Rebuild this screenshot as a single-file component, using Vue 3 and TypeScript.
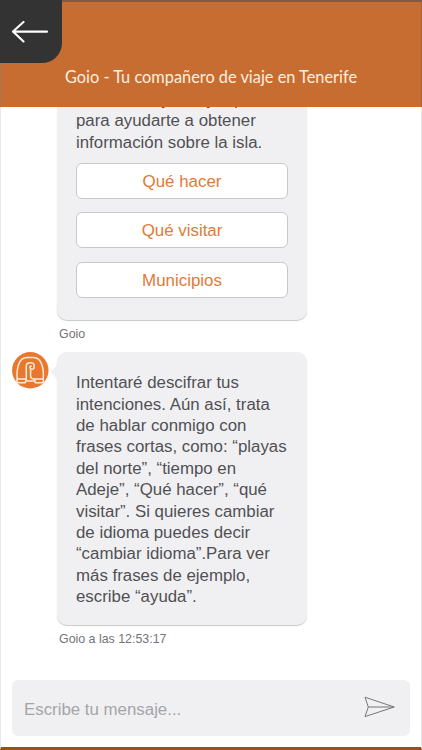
<script setup lang="ts">
import { ref } from 'vue'

const draft = ref('')
const choices: string[] = ['Qué hacer', 'Qué visitar', 'Municipios']
const intro: string[] = ['llamo Goio y estoy aquí', 'para ayudarte a obtener', 'información sobre la isla.']
const help: string[] = [
  'Intentaré descifrar tus',
  'intenciones. Aún así, trata',
  'de hablar conmigo con',
  'frases cortas, como: “playas',
  'del norte”, “tiempo en',
  'Adeje”, “Qué hacer”, “qué',
  'visitar”. Si quieres cambiar',
  'de idioma puedes decir',
  '“cambiar idioma”.Para ver',
  'más frases de ejemplo,',
  'escribe “ayuda”.',
]
</script>

<template>
  <div class="screen">
    <header class="header">
      <button class="back" aria-label="Volver">
        <svg width="36" height="22" viewBox="0 0 36 22">
          <path d="M35 10.6H1M11.5 1L1 10.6L11.5 20.5" fill="none" stroke="#fff" stroke-width="2.1" stroke-linecap="round" />
        </svg>
      </button>
      <h1>Goio - Tu compañero de viaje en Tenerife</h1>
    </header>

    <main class="chat">
      <section class="bubble first">
        <p v-for="line in intro" :key="line">{{ line }}</p>
        <div class="choices">
          <button v-for="choice in choices" :key="choice" class="choice">{{ choice }}</button>
        </div>
      </section>
      <div class="meta">Goio</div>

      <div class="row">
        <svg class="avatar" width="37" height="37" viewBox="0 0 37 37">
          <circle cx="18.3" cy="18.3" r="18.2" fill="#e9782f" />
          <g fill="none" stroke="#ffe9d8" stroke-width="1.5" stroke-linejoin="round">
            <path d="M5.2 27C4.4 17 6.5 5.6 15 5.6H21.4C30 5.6 32 17 31.2 27" />
            <path d="M14.3 27V13.8C14.3 9.8 22 9.8 22 13V15.8C22 17.8 18 17.8 18 15.6V14.2H19.8" />
            <path d="M18.6 17.4V24C18.6 26 20 27 22.4 27" />
            <path d="M5.2 27H14.3L13.2 30.8H6.6C4.9 30.8 4.6 28.6 5.2 27ZM31.2 27H22.4L23.4 30.8H29.8C31.5 30.8 31.8 28.6 31.2 27Z" />
            <path d="M13.8 29H22.8" />
          </g>
        </svg>
        <section class="bubble second">
          <p v-for="line in help" :key="line">{{ line }}</p>
        </section>
      </div>
      <div class="meta">Goio a las 12:53:17</div>
    </main>

    <form class="composer" @submit.prevent>
      <input v-model="draft" placeholder="Escribe tu mensaje..." />
      <button class="send" aria-label="Enviar">
        <svg width="32" height="22" viewBox="0 0 32 22">
          <path d="M1 1.2L30.2 11L1 20.6L4.3 11ZM4.3 11H30.2" fill="none" stroke="#77777b" stroke-width="1" stroke-linejoin="round" />
        </svg>
      </button>
    </form>
  </div>
</template>

<style>
body {
  background: #fff;
}
</style>

<style scoped>
.screen {
  box-sizing: border-box;
  width: 422px;
  height: 750px;
  display: flex;
  flex-direction: column;
  background: #fff;
  border-left: 1px solid #e9e9eb;
  border-right: 1px solid #e9e9eb;
  border-bottom: 3px solid #985021;
  font-family: "Liberation Sans", Arial, sans-serif;
}
button {
  border: 0;
  padding: 0;
  margin: 0;
  font-family: inherit;
}
p,
h1 {
  margin: 0;
}
.header {
  box-sizing: border-box;
  flex: none;
  height: 107px;
  margin: 0 -1px;
  background: #c86d32;
  border-top: 2px solid #7d5b4b;
  border-left: 1px solid #a97550;
  border-right: 1px solid #a06441;
  position: relative;
  z-index: 1;
}
.back {
  display: flex;
  align-items: center;
  box-sizing: border-box;
  width: 62px;
  height: 63px;
  margin: -2px 0 0 -1px;
  padding-left: 12px;
  background: #333;
  border-radius: 0 0 20px 0;
}
h1 {
  margin-top: 2px;
  text-align: center;
  font: 400 16.35px/24px Lato, sans-serif;
  color: #ffeddf;
}
.chat {
  flex: 1;
  min-height: 0;
}
.bubble {
  box-sizing: border-box;
  width: 250px;
  background: #f0f0f3;
  border-radius: 10px;
  box-shadow: 0 1px 1px #c9c9cc;
  color: #505054;
  padding: 0 19px;
  font-size: 16.85px;
  line-height: 21.36px;
}
.bubble p {
  white-space: nowrap;
}
.first {
  margin: -18px 0 0 56px;
  height: 231px;
}
.choices {
  display: flex;
  flex-direction: column;
  gap: 13.4px;
  margin-top: 10px;
}
.choice {
  box-sizing: border-box;
  height: 36px;
  width: 212px;
  padding-top: 2px;
  border: 1px solid #c8c8cc;
  border-radius: 6px;
  background: #fff;
  color: #df7a38;
  font-size: 16.9px;
}
.meta {
  margin: 6px 0 0 58px;
  font-size: 12.4px;
  line-height: 16px;
  color: #747478;
}
.row {
  display: flex;
  align-items: flex-start;
  margin-top: 10px;
  padding-left: 11px;
}
.avatar {
  margin-right: 8px;
}
.second {
  position: relative;
  height: 273px;
  padding-top: 20.4px;
}
.second::before {
  content: "";
  position: absolute;
  left: -6px;
  top: 13px;
  border: 7px solid transparent;
  border-left: 0;
  border-right: 6px solid #f0f0f3;
}
.composer {
  flex: none;
  display: flex;
  align-items: center;
  box-sizing: border-box;
  height: 56px;
  margin: 0 11px 11px;
  padding: 0 14px 0 12px;
  background: #f0f0f2;
  border-radius: 6px;
}
input {
  flex: 1;
  min-width: 0;
  border: 0;
  outline: 0;
  padding: 3px 0 0;
  background: transparent;
  font: 16.85px "Liberation Sans", Arial, sans-serif;
}
input::placeholder {
  color: #a5a5a9;
  opacity: 1;
}
.send {
  display: flex;
  margin-bottom: 3px;
  background: transparent;
}
</style>
